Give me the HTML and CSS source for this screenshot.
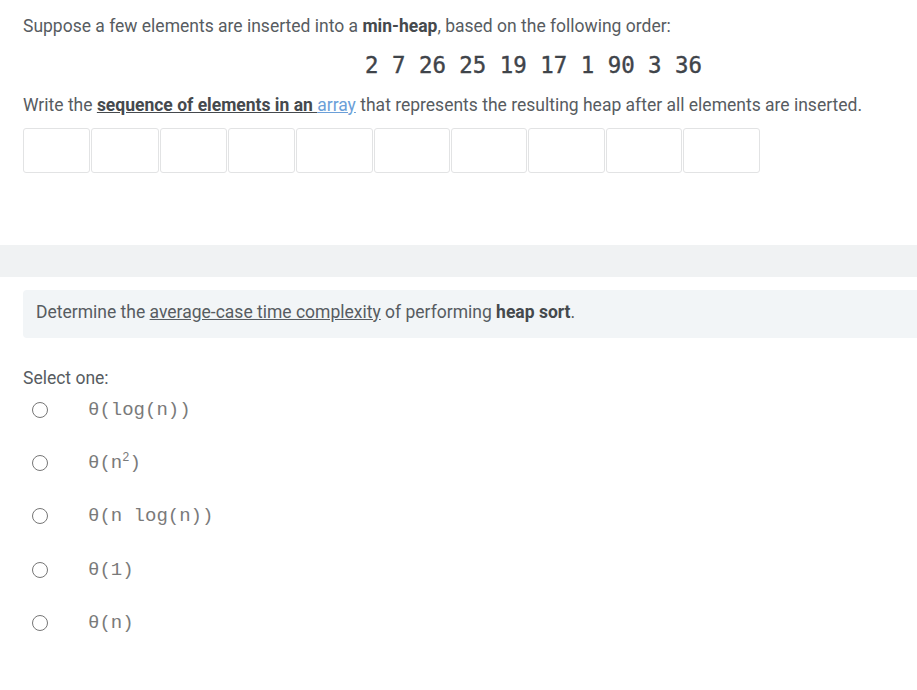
FILE: index.html
```html
<!DOCTYPE html>
<html>
<head>
<meta charset="utf-8">
<link rel="stylesheet" href="styles.css">
</head>
<body>
<section class="q1">
  <p class="line first">Suppose a few elements are inserted into a <b>min-heap</b>, based on the following order:</p>
  <p class="sequence">2 7 26 25 19 17 1 90 3 36</p>
  <p class="line">Write the <b class="u">sequence of elements in an </b><a class="link">array</a> that represents the resulting heap after all elements are inserted.</p>
  <div class="boxes">
    <span class="box narrow"></span>
    <span class="box narrow"></span>
    <span class="box narrow"></span>
    <span class="box narrow"></span>
    <span class="box wide"></span>
    <span class="box wide"></span>
    <span class="box wide"></span>
    <span class="box wide"></span>
    <span class="box wide"></span>
    <span class="box wide"></span>
  </div>
</section>
<div class="band"></div>
<section class="q2">
  <div class="prompt">Determine the <span class="u">average-case time complexity</span> of performing <b>heap sort</b>.</div>
  <p class="select">Select one:</p>
  <ul class="options">
    <li><span class="radio"></span><span class="opt">θ(log(n))</span></li>
    <li><span class="radio"></span><span class="opt">θ(n<sup>2</sup>)</span></li>
    <li><span class="radio"></span><span class="opt">θ(n log(n))</span></li>
    <li><span class="radio"></span><span class="opt">θ(1)</span></li>
    <li><span class="radio"></span><span class="opt">θ(n)</span></li>
  </ul>
</section>
</body>
</html>
```
FILE: styles.css
```css
html, body {
  margin: 0;
  padding: 0;
  background: #ffffff;
}
body {
  font-family: Roboto, "Liberation Sans", sans-serif;
  font-size: 17.5px;
  color: #575c61;
  width: 917px;
  overflow: hidden;
}
p { margin: 0; }
.q1 {
  padding: 14px 0 0 23px;
}
.line {
  line-height: 24px;
}
.line b {
  color: #45494d;
  font-weight: 700;
}
.u { text-decoration: underline; }
.link {
  color: #6b9fd8;
  text-decoration: underline;
}
.sequence {
  font-family: "DejaVu Sans Mono", monospace;
  font-size: 22.4px;
  font-weight: normal;
  color: #3f444a;
  -webkit-text-stroke: 0.4px #3f444a;
  padding-left: 342px;
  line-height: 28px;
  margin: 13px 0 14px;
}
.boxes {
  display: flex;
  margin-top: 11px;
  height: 45px;
}
.box {
  box-sizing: border-box;
  height: 45px;
  border: 1px solid #e2e3e4;
  border-radius: 3px;
  margin-right: 1px;
  flex: none;
}
.narrow { width: 67.3px; }
.wide { width: 76.4px; }
.band {
  margin-top: 72px;
  height: 32px;
  background: #f0f2f3;
}
.q2 {
  padding: 13px 0 0 23px;
}
.prompt {
  background: #f2f5f7;
  border-radius: 4px 0 0 4px;
  height: 48px;
  box-sizing: border-box;
  padding: 10px 13px;
  line-height: 24px;
}
.prompt b {
  color: #45494d;
}
.select {
  margin-top: 28px;
  line-height: 24px;
}
.options {
  list-style: none;
  margin: 6px 0 0 0;
  padding: 0;
}
.options li {
  display: flex;
  align-items: center;
  height: 53.3px;
  margin: 0;
}
.options li:first-child {
  margin-top: -13px;
}
.radio {
  box-sizing: border-box;
  width: 16px;
  height: 16px;
  border: 1.3px solid #767676;
  border-radius: 50%;
  margin-left: 9px;
  margin-right: 40px;
  flex: none;
}
.opt {
  font-family: "Liberation Mono", "Courier New", monospace;
  font-size: 19px;
  color: #7a7a7a;
}
.opt sup {
  font-size: 12px;
  line-height: 0;
}
```
